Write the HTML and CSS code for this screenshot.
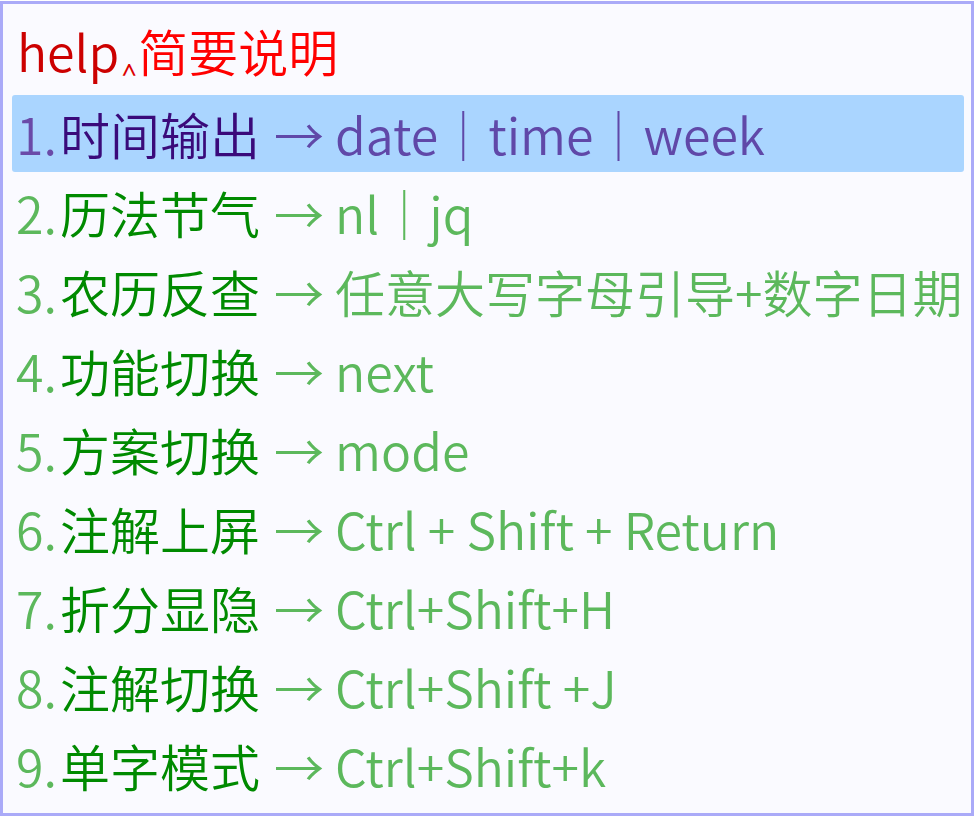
FILE: index.html
```html
<!DOCTYPE html>
<html lang="zh-CN">
<head>
<meta charset="utf-8">
<title>help 简要说明</title>
<link rel="stylesheet" href="styles.css">
</head>
<body>
<div class="panel">
  <div class="preedit"><span class="input">help</span><span class="caret">‸</span><span class="hint">简要说明</span></div>
  <ol class="cands">
    <li class="cand hl"><span class="idx">1.</span><span class="text">时间输出</span><span class="cmt">→ date｜time｜week</span></li>
    <li class="cand"><span class="idx">2.</span><span class="text">历法节气</span><span class="cmt">→ nl｜jq</span></li>
    <li class="cand"><span class="idx">3.</span><span class="text">农历反查</span><span class="cmt">→ 任意大写字母引导+数字日期</span></li>
    <li class="cand"><span class="idx">4.</span><span class="text">功能切换</span><span class="cmt">→ next</span></li>
    <li class="cand"><span class="idx">5.</span><span class="text">方案切换</span><span class="cmt">→ mode</span></li>
    <li class="cand"><span class="idx">6.</span><span class="text">注解上屏</span><span class="cmt">→ Ctrl + Shift + Return</span></li>
    <li class="cand"><span class="idx">7.</span><span class="text">折分显隐</span><span class="cmt">→ Ctrl+Shift+H</span></li>
    <li class="cand"><span class="idx">8.</span><span class="text">注解切换</span><span class="cmt">→ Ctrl+Shift +J</span></li>
    <li class="cand"><span class="idx">9.</span><span class="text">单字模式</span><span class="cmt">→ Ctrl+Shift+k</span></li>
  </ol>
</div>
</body>
</html>
```
FILE: styles.css
```css
html, body {
  margin: 0;
  padding: 0;
  background: #ffffff;
}
body {
  font-family: "Noto Sans CJK SC", "Noto Sans", sans-serif;
  font-size: 50px;
  font-weight: 350;
}
.panel {
  box-sizing: border-box;
  width: 974px;
  height: 815px;
  margin-top: 1px;
  border: 3px solid #aaaaf8;
  background: #fafaff;
  padding: 8px 7px 0 9px;
  display: flex;
  flex-direction: column;
}
.preedit {
  height: 83px;
  line-height: 77px;
  padding-left: 5px;
  white-space: nowrap;
}
.input { color: #cc0000; }
.caret {
  color: #dd0000;
  font-family: "DejaVu Sans", sans-serif;
  font-size: 36px;
  vertical-align: 5px;
  margin: 0 2px 0 3px;
}
.hint { color: #ff0000; }
.cands {
  list-style: none;
  margin: 0;
  padding: 0;
  display: flex;
  flex-direction: column;
  gap: 2px;
}
.cand {
  height: 77px;
  line-height: 77px;
  padding-left: 4px;
  border-radius: 3px;
  white-space: nowrap;
  display: flex;
  color: #5cb85c;
}
.cand .idx { color: #5cb85c; margin-right: 3px; }
.cand .text { color: #008a00; margin-right: 14px; }
.cand.hl { background: #aad5ff; }
.cand.hl .idx { color: #6a4aa8; }
.cand.hl .text { color: #3a0a7a; }
.cand.hl .cmt { color: #6048a8; }
```
